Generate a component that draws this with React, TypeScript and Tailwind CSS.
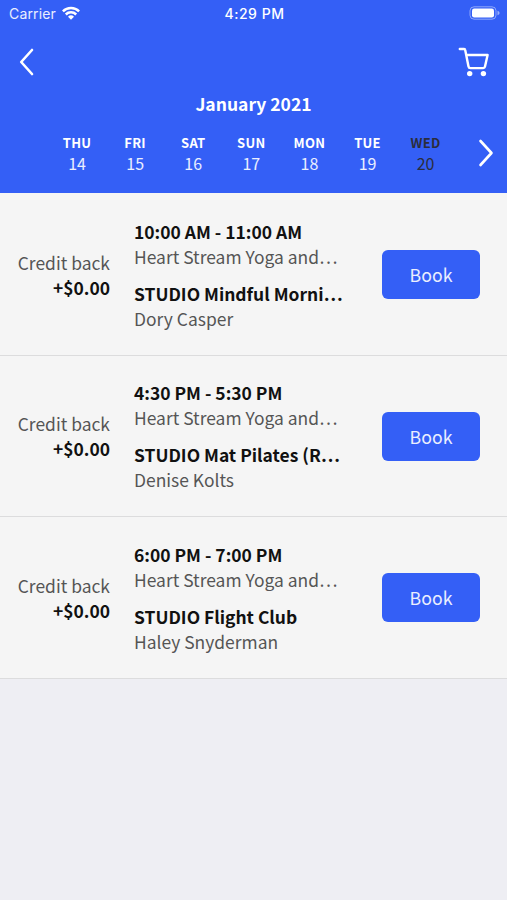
const sessions = [
  { time: '10:00 AM - 11:00 AM', title: 'STUDIO Mindful Morni…', teacher: 'Dory Casper' },
  { time: '4:30 PM - 5:30 PM', title: 'STUDIO Mat Pilates (R…', teacher: 'Denise Kolts' },
  { time: '6:00 PM - 7:00 PM', title: 'STUDIO Flight Club', teacher: 'Haley Snyderman' },
];

const days = [
  { name: 'THU', date: 14 },
  { name: 'FRI', date: 15 },
  { name: 'SAT', date: 16 },
  { name: 'SUN', date: 17 },
  { name: 'MON', date: 18 },
  { name: 'TUE', date: 19 },
  { name: 'WED', date: 20, selected: true },
];

function StatusBar() {
  return (
    <div className="grid h-[26px] grid-cols-3 items-center pl-[9px] pr-[7px] font-['Inter',sans-serif] text-[14px] text-white">
      <div className="flex items-center gap-[6px]">
        <span className="tracking-[0.15px] text-white/90">Carrier</span>
        <svg width="18" height="14" viewBox="0 0 18 14" fill="none" stroke="white" strokeWidth="2.5">
          <path d="M0.9 5.3a11.6 11.6 0 0 1 16.2 0" />
          <path d="M3.8 8.5a7.4 7.4 0 0 1 10.4 0" />
          <path d="M9 13.7 6 10.7a4.3 4.3 0 0 1 6 0Z" fill="white" stroke="none" />
        </svg>
      </div>
      <span className="text-center font-medium tracking-[0.5px]">4:29 PM</span>
      <svg className="justify-self-end" width="31" height="14" viewBox="0 0 31 14" fill="none">
        <rect x="1" y="0.8" width="26" height="12.4" rx="4" stroke="white" strokeOpacity="0.45" />
        <rect x="3" y="2.6" width="22" height="8.8" rx="2.2" fill="white" />
        <path d="M28.5 4.8v4.4c1.6-.5 2-1.3 2-2.2s-.4-1.7-2-2.2Z" fill="white" fillOpacity="0.5" />
      </svg>
    </div>
  );
}

export default function App() {
  return (
    <div className="flex h-[900px] w-[507px] flex-col overflow-hidden bg-[#eeeef3] font-['Noto_Sans_CJK_KR',sans-serif]">
      <header className="h-[193px] shrink-0 bg-[#345ff6] text-white">
        <StatusBar />
        <div className="flex h-[71px] items-center justify-between pl-[19px] pr-[17px]">
          <svg width="16" height="28" viewBox="0 0 16 28" fill="none" stroke="white" strokeWidth="2.6" strokeLinecap="round" strokeLinejoin="round">
            <path d="M13 2 2.2 14 13 26" />
          </svg>
          <svg width="32" height="30" viewBox="0 0 32 30" fill="none" stroke="white" strokeWidth="2.4" strokeLinecap="round" strokeLinejoin="round">
            <path d="M1.8 2h4.3c.6 0 1 .4 1.1 1l3.3 16.5c.2 1 .9 1.6 1.9 1.6h12.8c.9 0 1.6-.6 1.8-1.5L29.6 8H8.4" />
            <circle cx="11.7" cy="26.6" r="2.7" fill="white" stroke="none" />
            <circle cx="25.4" cy="26.6" r="2.7" fill="white" stroke="none" />
          </svg>
        </div>
        <h1 className="text-center text-[17.5px] font-bold leading-[14px]">January 2021</h1>
        <div className="mt-[22px] flex h-[40px] items-center pl-[48px]">
          {days.map((day) => (
            <div key={day.name} className={`w-[58.1px] shrink-0 text-center ${day.selected ? 'text-[#2b2d3c]' : ''}`}>
              <div className="text-[13px] font-bold leading-[20px] tracking-[0.3px]">{day.name}</div>
              <div className={`text-[16px] leading-[20px] ${day.selected ? '' : 'text-white/90'}`}>{day.date}</div>
            </div>
          ))}
          <svg className="ml-[23px]" width="16" height="28" viewBox="0 0 16 28" fill="none" stroke="white" strokeWidth="2.6" strokeLinecap="round" strokeLinejoin="round">
            <path d="M2.5 2 13.5 14 2.5 26" />
          </svg>
        </div>
      </header>
      <main className="bg-[#f5f5f5] pt-px text-[17.45px] leading-[25px] text-[#111111]">
        {sessions.map((session) => (
          <section key={session.time} className="flex h-[161.7px] items-center border-b border-[#dcdcdd]">
            <div className="w-[110px] shrink-0 pt-[0.6px] text-right">
              <div className="text-[#555555]">Credit back</div>
              <div className="font-bold">+$0.00</div>
            </div>
            <div className="ml-6 w-[248px] shrink-0 whitespace-nowrap pt-[0.6px]">
              <div className="font-bold">{session.time}</div>
              <div className="text-[#555555]">Heart Stream Yoga and…</div>
              <div className="mt-3 font-bold">{session.title}</div>
              <div className="text-[#555555]">{session.teacher}</div>
            </div>
            <button className="h-[49px] w-[98px] shrink-0 rounded-[6px] bg-[#345ff6] text-[17.7px] text-white/90">Book</button>
          </section>
        ))}
      </main>
    </div>
  );
}
